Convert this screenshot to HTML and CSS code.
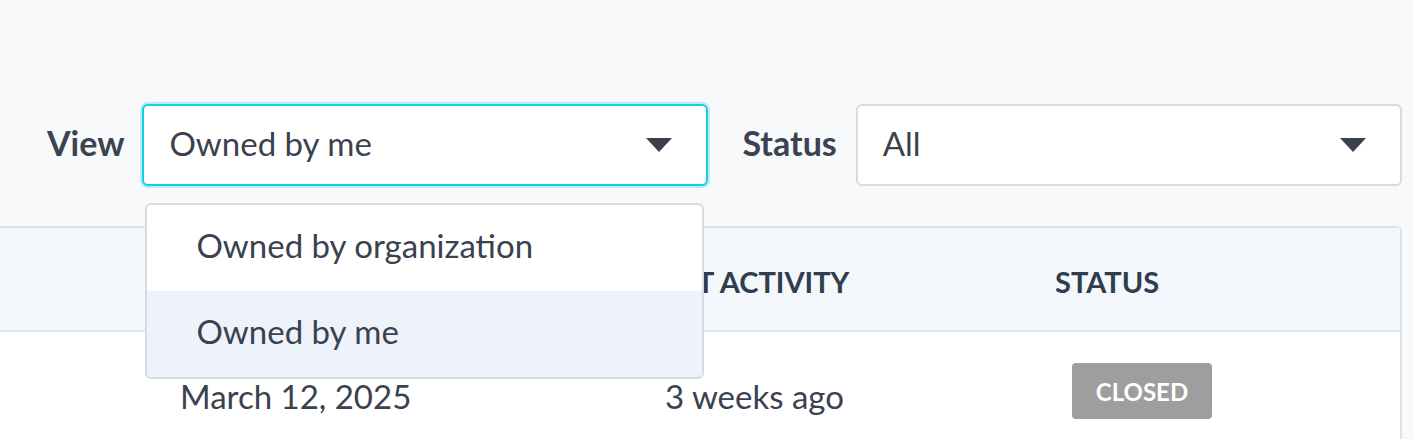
FILE: index.html
```html
<!DOCTYPE html>
<html lang="en">
<head>
<meta charset="utf-8">
<title>Records</title>
<link rel="stylesheet" href="styles.css">
</head>
<body>
<div class="page">
  <div class="filters">
    <label class="filter-label">View</label>
    <div class="select-wrap view-wrap">
      <div class="select select-focused">
        <span class="select-value">Owned by me</span>
        <svg class="caret" width="26" height="14" viewBox="0 0 26 14"><path d="M0 0H26L13 14Z" fill="#3b414c"/></svg>
      </div>
      <ul class="menu">
        <li class="menu-item">Owned by organization</li>
        <li class="menu-item menu-item-active">Owned by me</li>
      </ul>
    </div>
    <label class="filter-label status-label">Status</label>
    <div class="select-wrap status-wrap">
      <div class="select">
        <span class="select-value">All</span>
        <svg class="caret" width="26" height="14" viewBox="0 0 26 14"><path d="M0 0H26L13 14Z" fill="#3b414c"/></svg>
      </div>
    </div>
  </div>

  <div class="table">
    <div class="row head">
      <div class="cell"></div>
      <div class="cell">CREATED</div>
      <div class="cell">LAST ACTIVITY</div>
      <div class="cell">STATUS</div>
    </div>
    <div class="row body-row">
      <div class="cell"></div>
      <div class="cell text">March 12, 2025</div>
      <div class="cell text">3 weeks ago</div>
      <div class="cell"><span class="badge">CLOSED</span></div>
    </div>
  </div>
</div>
</body>
</html>
```
FILE: styles.css
```css
* { box-sizing: border-box; }
html, body { margin: 0; padding: 0; }
body {
  background: #f8f9fb;
  font-family: Lato, "Open Sans", "Liberation Sans", sans-serif;
  color: #3c4450;
  overflow: hidden;
}
.page { width: 1413px; height: 439px; }

.filters {
  display: flex;
  align-items: center;
  margin-top: 104px;
  height: 82px;
  padding-left: 47px;
  padding-right: 11px;
}
.filter-label {
  font-size: 34px;
  font-weight: 700;
  color: #3b4350;
  margin-right: 18px;
  padding-bottom: 5px;
}
.status-label { margin-left: 34px; margin-right: 19px; }
.select-wrap { position: relative; height: 82px; }
.view-wrap { width: 566px; }
.status-wrap { flex: 1; }
.select {
  height: 82px;
  background: #fff;
  border: 2px solid #d6dbe1;
  border-radius: 6px;
  display: flex;
  align-items: center;
  justify-content: space-between;
  padding-left: 25px;
  padding-right: 34px;
}
.select-focused {
  border-color: #12d0e4;
  box-shadow: 0 0 0 2px rgba(18, 208, 228, 0.28);
}
.select-value { font-size: 33px; color: #3a424e; padding-bottom: 4px; }
.caret { display: block; }

.menu {
  position: absolute;
  left: 3px;
  top: 99px;
  width: 559px;
  margin: 0;
  padding: 0;
  list-style: none;
  background: #fff;
  border: 2px solid #d6dbe1;
  border-radius: 6px;
  overflow: hidden;
  z-index: 5;
}
.menu-item {
  height: 86px;
  display: flex;
  align-items: center;
  padding-left: 49px;
  padding-bottom: 7px;
  font-size: 33px;
  color: #3a424e;
}
.menu-item-active { background: #eef3fb; }

.table {
  margin-top: 40px;
  width: 1402px;
  background: #fff;
  border: 2px solid #dde2e8;
  border-left: none;
  border-radius: 0 6px 0 0;
}
.row {
  display: grid;
  grid-template-columns: 180px 466px 409px 1fr;
}
.head {
  height: 104px;
  background: #f4f7fb;
  border-bottom: 2px solid #dde2e8;
  align-items: center;
  padding-top: 4px;
  font-size: 29px;
  font-weight: 700;
  color: #2f3d4e;
}
.body-row {
  height: 118px;
  align-items: center;
}
.text { font-size: 33px; color: #3a424e; padding-top: 9px; }
.body-row .text:nth-child(3) { padding-left: 19px; }
.badge {
  display: inline-flex;
  align-items: center;
  justify-content: center;
  margin-left: 17px;
  width: 140px;
  height: 56px;
  background: #9e9e9e;
  color: #fff;
  font-size: 24px;
  font-weight: 700;
  border-radius: 4px;
}
```
